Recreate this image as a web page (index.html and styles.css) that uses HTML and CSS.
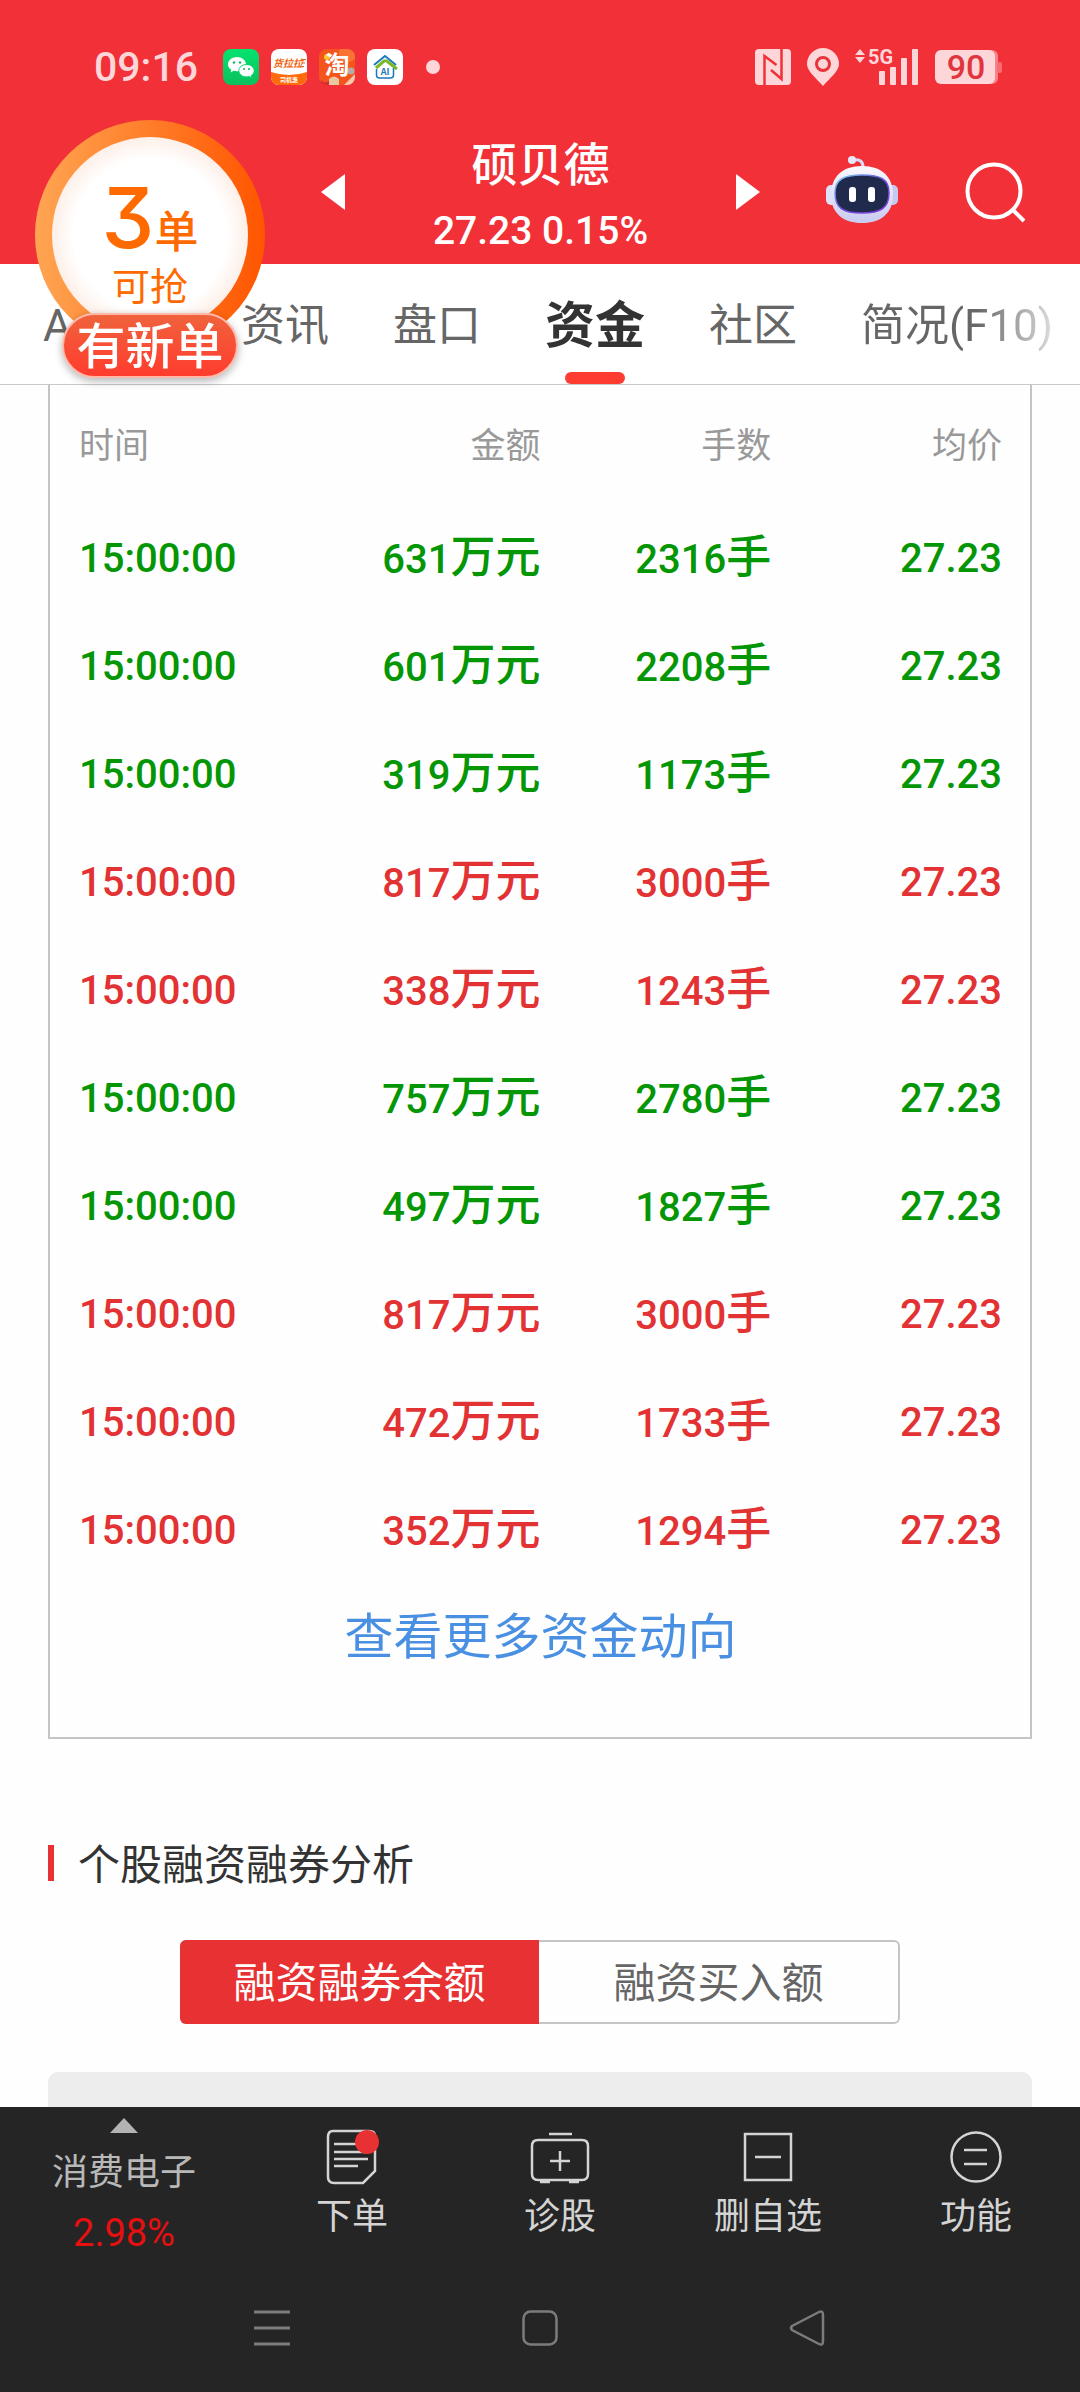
FILE: index.html
```html
<!DOCTYPE html>
<html lang="zh-CN">
<head>
<meta charset="utf-8">
<meta name="viewport" content="width=device-width, initial-scale=1">
<title>硕贝德 资金</title>
<link rel="stylesheet" href="styles.css">
</head>
<body>
<header class="top">
  <div class="status">
    <span class="clock">09:16</span>
    <div class="apps">
      <svg class="app" viewBox="0 0 36 36">
        <defs><linearGradient id="wx" x1="0" y1="0" x2="0" y2="1"><stop offset="0" stop-color="#02e36f"/><stop offset="1" stop-color="#0bc05c"/></linearGradient></defs>
        <rect width="36" height="36" rx="8" fill="url(#wx)"/>
        <path d="M14 8c-5 0-9 3.200-9 7.200 0 2.300 1.300 4.300 3.300 5.600L7.500 23.500l3.200-1.700c1.100.3 2.200.5 3.300.5 5 0 9-3.200 9-7.100S19 8 14 8z" fill="#fff"/>
        <path d="M23.500 15.500c-4.300 0-7.700 2.800-7.700 6.200s3.400 6.200 7.700 6.200c1 0 1.900-.1 2.700-.4l2.600 1.400-.6-2.300c1.800-1.200 3-2.900 3-4.900 0-3.400-3.400-6.200-7.700-6.200z" fill="#fff" stroke="#06d266" stroke-width="1"/>
        <circle cx="11" cy="13.500" r="1.200" fill="#10b85c"/><circle cx="17" cy="13.500" r="1.200" fill="#10b85c"/>
        <circle cx="21" cy="20" r="1" fill="#10b85c"/><circle cx="26" cy="20" r="1" fill="#10b85c"/>
      </svg>
      <svg class="app" viewBox="0 0 36 36">
        <defs><clipPath id="tile"><rect width="36" height="36" rx="8"/></clipPath></defs>
        <g clip-path="url(#tile)"><rect width="36" height="36" fill="#fff"/><path d="M0 23q18 6 36 0v13H0z" fill="#ff6b0a"/></g>
        <text class="app-text" x="17" y="18" font-size="10" font-style="italic" fill="#ee6410">货拉拉</text>
        <path d="M31 10.500h4M31 14h3M31 17.500h2" stroke="#ee6410"/>
        <text class="app-text" x="18" y="33" font-size="6" fill="#fff">司机惠</text>
      </svg>
      <svg class="app" viewBox="0 0 36 36">
        <g clip-path="url(#tile)"><rect width="36" height="36" fill="#f4551d"/><circle cx="29" cy="4" r="9" fill="#f97432"/>
        <path d="M2 31q4 5 9 0l2 5H2z" fill="#d92838"/><path d="M10 30q5-5 10 0v6H10z" fill="#e8c7a0"/><path d="M25 36l11-11v11z" fill="#f7c9b0"/><circle cx="32" cy="22" r="3.500" fill="#b9a9a9"/></g>
        <circle cx="8" cy="8" r="3" fill="#ffc62e"/>
        <text class="app-text" x="18" y="25" font-size="25" fill="#fff">淘</text>
      </svg>
      <svg class="app" viewBox="0 0 36 36">
        <rect width="36" height="36" rx="8" fill="#fff"/>
        <path d="M7 16L18 7l11 9" fill="none" stroke="#1b78bb" stroke-width="2"/>
        <path d="M9 19l8-7q2-1 4 1l9 7" fill="none" stroke="#7ab829" stroke-width="3"/>
        <path d="M9.500 20v6q0 3 3 3h11q3 0 3-3v-7" fill="none" stroke="#1b78bb" stroke-width="1.500"/>
        <text class="app-text" x="18" y="26" font-size="9" fill="#1b78bb">AI</text>
      </svg>
    </div>
    <span class="dot"></span>
    <div class="signals">
      <svg width="36" height="36" viewBox="0 0 36 36"><rect width="36" height="36" rx="4" fill="#fdd6d9"/><path d="M9.500 36V7l12 9M26.500 0v30L16 21" fill="none" stroke="#f23038" stroke-width="2.500"/></svg>
      <svg width="32" height="38" viewBox="0 0 32 38"><path d="M16 0a16 16 0 0 1 16 16c0 7-9 14-16 22C9 30 0 23 0 16A16 16 0 0 1 16 0z" fill="#fdd6d9"/><circle cx="16" cy="16" r="6.500" fill="none" stroke="#e8343b" stroke-width="3"/></svg>
      <svg width="64" height="38" viewBox="0 0 64 38" fill="#fdd6d9">
        <path d="M0 7l5-6 5 6zM0 9h10l-5 6z"/>
        <text class="net" x="13" y="16">5G</text>
        <rect x="24" y="23" width="6" height="14" rx="1"/><rect x="35" y="19" width="6" height="18" rx="1"/><rect x="46" y="10" width="6" height="27" rx="1"/><rect x="57" y="1" width="6" height="36" rx="1"/>
      </svg>
      <svg width="67" height="34" viewBox="0 0 67 34"><rect x="2" width="61" height="34" rx="6" fill="#f98389"/><rect x="62" y="12" width="5" height="11" rx="2" fill="#f76b72"/><rect width="60" height="34" rx="6" fill="#fdd6d9"/><text class="charge" x="31" y="29">90</text></svg>
    </div>
  </div>
  <div class="quote">
    <button class="icon-btn" aria-label="上一只"><svg width="24" height="36" viewBox="0 0 24 36"><path d="M24 0v36L0 18z" fill="#fff"/></svg></button>
    <h1 class="stock"><span class="name">硕贝德</span><span class="price">27.23 0.15%</span></h1>
    <button class="icon-btn" aria-label="下一只"><svg width="24" height="36" viewBox="0 0 24 36"><path d="M0 0v36l24-18z" fill="#fff"/></svg></button>
    <button class="icon-btn robot" aria-label="智能助手">
      <svg width="72" height="68" viewBox="0 0 72 68">
        <defs>
          <linearGradient id="shell" x1="0" y1="0" x2="0" y2="1"><stop offset="0" stop-color="#fafaff"/><stop offset="1" stop-color="#c9cbf0"/></linearGradient>
          <linearGradient id="rim" x1="0" y1="0" x2="1" y2="1"><stop offset="0" stop-color="#7fd4f0"/><stop offset=".5" stop-color="#6a4bd8"/><stop offset="1" stop-color="#8b3fe0"/></linearGradient>
        </defs>
        <path d="M26 5q11-2 11 7" fill="none" stroke="#d9daf5" stroke-width="3"/><circle cx="26" cy="5" r="4" fill="#e6e8fb"/>
        <rect x="0" y="30" width="12" height="20" rx="5" fill="#dfe1f8"/><rect x="60" y="30" width="12" height="20" rx="5" fill="#c7c9f0"/>
        <path d="M36 11c20 0 31 11 31 29S55 68 36 68 5 58 5 40 16 11 36 11z" fill="url(#shell)"/>
        <path d="M36 20c18 0 27 4 27 18 0 15-8 20-27 20S9 53 9 38c0-14 9-18 27-18z" fill="#1f2a4c" stroke="url(#rim)" stroke-width="1.500"/>
        <rect x="23" y="32" width="7" height="15" rx="3" fill="#fff"/><rect x="42" y="32" width="7" height="15" rx="3" fill="#fff"/>
      </svg>
    </button>
    <button class="icon-btn search" aria-label="搜索"><svg width="60" height="60" viewBox="0 0 60 60" fill="none" stroke="#fff" stroke-width="4"><circle cx="28" cy="29" r="26.500"/><path d="M47 48l11 11"/></svg></button>
  </div>
</header>

<nav class="tabs">
  <a class="tab first" href="#">A</a>
  <a class="tab" href="#">资讯</a>
  <a class="tab" href="#">盘口</a>
  <a class="tab active" href="#">资金</a>
  <a class="tab" href="#">社区</a>
  <a class="tab fade" href="#">简况(F10)</a>
</nav>

<main class="content">
  <section class="flow">
    <table class="deals">
      <thead><tr><th>时间</th><th>金额</th><th>手数</th><th>均价</th></tr></thead>
      <tbody>
        <tr class="sell"><td>15:00:00</td><td>631<span class="unit">万元</span></td><td>2316<span class="unit">手</span></td><td>27.23</td></tr>
        <tr class="sell"><td>15:00:00</td><td>601<span class="unit">万元</span></td><td>2208<span class="unit">手</span></td><td>27.23</td></tr>
        <tr class="sell"><td>15:00:00</td><td>319<span class="unit">万元</span></td><td>1173<span class="unit">手</span></td><td>27.23</td></tr>
        <tr class="buy"><td>15:00:00</td><td>817<span class="unit">万元</span></td><td>3000<span class="unit">手</span></td><td>27.23</td></tr>
        <tr class="buy"><td>15:00:00</td><td>338<span class="unit">万元</span></td><td>1243<span class="unit">手</span></td><td>27.23</td></tr>
        <tr class="sell"><td>15:00:00</td><td>757<span class="unit">万元</span></td><td>2780<span class="unit">手</span></td><td>27.23</td></tr>
        <tr class="sell"><td>15:00:00</td><td>497<span class="unit">万元</span></td><td>1827<span class="unit">手</span></td><td>27.23</td></tr>
        <tr class="buy"><td>15:00:00</td><td>817<span class="unit">万元</span></td><td>3000<span class="unit">手</span></td><td>27.23</td></tr>
        <tr class="buy"><td>15:00:00</td><td>472<span class="unit">万元</span></td><td>1733<span class="unit">手</span></td><td>27.23</td></tr>
        <tr class="buy"><td>15:00:00</td><td>352<span class="unit">万元</span></td><td>1294<span class="unit">手</span></td><td>27.23</td></tr>
      </tbody>
    </table>
    <a class="more" href="#">查看更多资金动向</a>
  </section>

  <section class="margin-trading">
    <h2 class="section-title">个股融资融券分析</h2>
    <div class="segment">
      <button class="seg on">融资融券余额</button>
      <button class="seg">融资买入额</button>
    </div>
    <div class="chart-head"></div>
  </section>
</main>

<footer class="bottom">
  <div class="toolbar">
    <button class="tool sector">
      <svg width="28" height="15" viewBox="0 0 28 15"><path d="M14 0l14 15H0z" fill="#b3b3b3"/></svg>
      <span class="sector-name">消费电子</span>
      <span class="sector-rate">2.98%</span>
    </button>
    <button class="tool">
      <svg width="52" height="56" viewBox="2 0 52 56" fill="none" stroke="#d4d4d4" stroke-width="2.500"><path d="M9 1h36q6 0 6 5v35L39 53H10q-6 0-6-6V7q0-6 5-6z"/><path d="M10 14h24M10 22h32M10 29h34M10 36h24"/><circle cx="43" cy="12" r="12" fill="#e83132" stroke="none"/></svg>
      <span>下单</span>
    </button>
    <button class="tool">
      <svg width="60" height="56" viewBox="0 0 60 56" fill="none" stroke="#d4d4d4" stroke-width="2.500"><path d="M19 4h23M8 10h44q6 0 6 6v28q0 6-6 6H8q-6 0-6-6V16q0-6 6-6zM30 21v20M20 31h20M10 52h10M39 52h10"/></svg>
      <span>诊股</span>
    </button>
    <button class="tool">
      <svg width="56" height="56" viewBox="0 0 56 56" fill="none" stroke="#d4d4d4" stroke-width="2.500"><path d="M5 4h46v46H5zM15 27h26"/></svg>
      <span>删自选</span>
    </button>
    <button class="tool">
      <svg width="56" height="56" viewBox="0 0 56 56" fill="none" stroke="#d4d4d4" stroke-width="2.500"><circle cx="28" cy="27" r="24.500"/><path d="M16 20h23M16 34h23"/></svg>
      <span>功能</span>
    </button>
  </div>
  <div class="sysnav">
    <button class="icon-btn" aria-label="最近任务"><svg width="36" height="36" viewBox="0 0 36 36" stroke="#7c7c7c" stroke-width="3"><path d="M0 2h36M0 18h36M0 34h36"/></svg></button>
    <button class="icon-btn" aria-label="主屏幕"><svg width="36" height="36" viewBox="0 0 36 36" fill="none" stroke="#7c7c7c" stroke-width="2.500"><rect x="1.500" y="1.500" width="33" height="33" rx="7"/></svg></button>
    <button class="icon-btn" aria-label="返回"><svg width="36" height="36" viewBox="0 0 36 36" fill="none" stroke="#7c7c7c" stroke-width="2.500"><path d="M2 16L29 2q4-2 4 3v26q0 5-4 3L2 20q-2-2 0-4z"/></svg></button>
  </div>
</footer>

<aside class="order-ball">
  <div class="ring"><div class="face">
    <p class="count"><b class="num">3</b><span>单</span></p>
    <p class="grab">可抢</p>
  </div></div>
  <div class="pill">有新单</div>
</aside>
</body>
</html>
```
FILE: styles.css
```css
* { box-sizing: border-box; }
body {
  margin: 0;
  position: relative;
  min-height: 100vh;
  display: flex;
  flex-direction: column;
  background: #fefefe;
  color: #333;
  font-family: Roboto, "Noto Sans CJK SC", sans-serif;
  font-size: 44px;
}
h1, h2, p { margin: 0; font-weight: 400; }
a { text-decoration: none; color: inherit; }
button { border: 0; padding: 0; background: none; font: inherit; color: inherit; }
svg { display: block; flex: none; overflow: visible; }

.top { background: #f23038; color: #fff; }
.status { height: 132px; padding: 2px 78px 0 94px; display: flex; align-items: center; color: #fdd6d9; }
.clock { font-size: 41px; font-weight: 500; }
.apps { display: flex; gap: 12px; margin-left: 25px; }
.app { width: 36px; height: 36px; }
.app-text { font-family: "Noto Sans CJK SC", sans-serif; font-weight: 700; text-anchor: middle; }
.dot { width: 14px; height: 14px; border-radius: 50%; background: #fdd6d9; margin-left: 23px; }
.signals { display: flex; gap: 16px; align-items: center; margin-left: auto; }
.net { font-size: 20px; font-weight: 700; }
.charge { font-size: 34px; font-weight: 500; fill: #e0353c; text-anchor: middle; }

.quote { display: flex; align-items: center; padding: 0 54px 0 321px; }
.icon-btn { flex: none; padding-bottom: 12px; }
.stock { flex: 1; display: flex; flex-direction: column; text-align: center; line-height: 66px; }
.name { font-size: 46px; font-weight: 500; }
.price { font-size: 39px; font-weight: 500; }
.robot { margin-left: 66px; padding-bottom: 18px; }
.search { margin-left: 68px; }

.tabs { height: 121px; display: flex; gap: 64px; padding-left: 43px; border-bottom: 1px solid #c8c8c8; background: #fff; overflow: hidden; }
.tab { flex: none; position: relative; height: 120px; line-height: 125px; color: #666; }
.first { width: 134px; }
.active { font-size: 50px; font-weight: 700; color: #333; }
.active::after { content: ""; position: absolute; left: 20px; right: 20px; bottom: 0; height: 12px; border-radius: 6px; background: #ff3c32; }
.fade { background: linear-gradient(90deg, #666 60%, #ddd); -webkit-background-clip: text; background-clip: text; color: transparent; }

.content { flex: 1; padding: 0 48px; }
.flow { border: 2px solid #c4c4c4; border-top: 0; padding: 0 28px 46px 29px; }
.deals { width: 100%; table-layout: fixed; border-collapse: collapse; text-align: right; }
.deals th { height: 119px; padding: 0 0 5px; font-size: 35px; font-weight: 400; color: #999; text-align: right; }
.deals td { height: 108px; padding: 2px 0 0; font-size: 40px; line-height: 54px; font-weight: 500; }
.deals th:first-child, .deals td:first-child { text-align: left; }
.unit { font-size: 45px; }
.sell { color: #059605; }
.buy { color: #e23233; }
.more { display: block; text-align: center; font-size: 49px; line-height: 107px; color: #4a90e2; }

.section-title { display: flex; align-items: center; gap: 24px; margin-top: 95px; font-size: 42px; line-height: 64px; }
.section-title::before { content: ""; width: 6px; height: 36px; margin-bottom: 6px; background: #e83132; }
.segment { display: flex; width: 720px; max-width: 100%; margin: 42px auto 48px; border-radius: 6px; border: 2px solid #c4c4c4; }
.seg { flex: 1; height: 80px; padding-top: 4px; line-height: 76px; font-size: 42px; color: #666; }
.seg.on { height: 84px; margin: -2px 0 -2px -2px; line-height: 80px; border-radius: 6px 0 0 6px; background: #e83132; color: #fff; }
.chart-head { height: 35px; border-radius: 10px 10px 0 0; background: #ededed; }

.bottom { background: #252525; color: #d4d4d4; }
.toolbar { display: grid; grid-template-columns: 248fr 208fr 208fr 208fr 208fr; }
.tool { display: flex; flex-direction: column; align-items: center; padding-top: 23px; font-size: 36px; line-height: 62px; }
.sector { padding-top: 11px; line-height: 60px; }
.sector-name { margin-top: 10px; color: #b8b8b8; }
.sector-rate { font-size: 38px; color: #e61010; }
.sysnav { height: 129px; display: flex; justify-content: center; align-items: center; gap: 232px; }
.sysnav .icon-btn { padding: 0; }

.order-ball { position: absolute; left: 35px; top: 120px; width: 230px; display: flex; flex-direction: column; align-items: center; color: #ff6a00; }
.ring { width: 230px; height: 230px; padding: 17px; border-radius: 50%; background: linear-gradient(90deg, #ffa552, #ff5500); }
.face { height: 196px; border-radius: 50%; padding-top: 36px; text-align: center; background: radial-gradient(circle, #fff 55%, #fdeee6 72%); }
.count { display: flex; justify-content: center; align-items: baseline; height: 90px; font-size: 44px; line-height: 90px; font-weight: 500; }
.num { font-family: Inter, sans-serif; font-size: 84px; font-weight: 500; font-feature-settings: "cv09"; }
.grab { font-size: 38px; line-height: 48px; }
.pill { margin-top: -37px; width: 176px; height: 65px; border-radius: 33px; border: 2px solid #ffb8a8; background: linear-gradient(#f0623c, #ff3c2e); box-shadow: 0 3px 8px rgba(0, 0, 0, .3); color: #fff; font-size: 49px; line-height: 66px; font-weight: 500; text-align: center; }
```
